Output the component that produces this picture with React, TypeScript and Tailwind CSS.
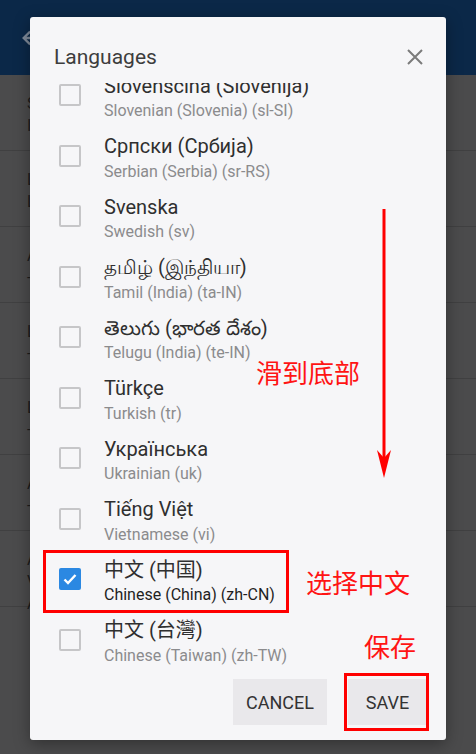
import React from "react";

const rows = [
  { t: "Slovenščina (Slovenija)", s: "Slovenian (Slovenia) (sl-SI)" },
  { t: "Српски (Србија)", s: "Serbian (Serbia) (sr-RS)" },
  { t: "Svenska", s: "Swedish (sv)" },
  { t: "தமிழ் (இந்தியா)", s: "Tamil (India) (ta-IN)" },
  { t: "తెలుగు (భారత దేశం)", s: "Telugu (India) (te-IN)" },
  { t: "Türkçe", s: "Turkish (tr)" },
  { t: "Українська", s: "Ukrainian (uk)" },
  { t: "Tiếng Việt", s: "Vietnamese (vi)" },
  { t: "中文 (中国)", s: "Chinese (China) (zh-CN)", checked: true },
  { t: "中文 (台灣)", s: "Chinese (Taiwan) (zh-TW)" },
];

const bgRows = [
  ["Sound", "Import"],
  ["Library", "Language"],
  ["Appearance", "-"],
  ["Library", "-"],
  ["Library", "-"],
  ["About", "-"],
  ["About", "Version", "All"],
];

const font = "font-['Roboto','Noto_Sans','Noto_Sans_CJK_SC',sans-serif]";

export default function App() {
  return (
    <div className={`relative w-[476px] h-[754px] overflow-hidden bg-[#4b4b4c] ${font}`}>
      {/* app bar */}
      <div className="h-[75px] bg-[#0b2848] flex items-center pl-[20px]">
        <svg width="22" height="22" viewBox="0 0 24 24" fill="none" stroke="#7f8a99" strokeWidth="2.5">
          <path d="M20 12H5M11 5l-7 7 7 7" />
        </svg>
      </div>
      {/* background list */}
      <div className="flex flex-col">
        {bgRows.map((r, i) => (
          <div
            key={i}
            className="h-[76px] border-b border-[#404041] pl-[27px] pt-[18px] flex flex-col text-[#1c1c1d] text-[16px] leading-[22px]"
          >
            {r.map((x, j) => (
              <span key={j}>{x}</span>
            ))}
          </div>
        ))}
      </div>

      {/* dialog */}
      <div className="absolute left-[30px] top-[17px] w-[416px] h-[723px] bg-[#f6f6f8] rounded-[3px] shadow-[0_4px_16px_rgba(0,0,0,0.35)] flex flex-col">
        <div className="h-[66px] flex justify-between items-start pl-[24px] pr-[23px] shrink-0">
          <div className="pt-[28px] text-[21px] leading-[25px] text-[#3d3d3d]">Languages</div>
          <svg className="mt-[32px]" width="16" height="16" viewBox="0 0 16 16" stroke="#7b7b7b" strokeWidth="2">
            <path d="M1 1L15 15M15 1L1 15" />
          </svg>
        </div>
        <div className="h-[588px] overflow-hidden shrink-0">
          <div className="-mt-[17px] flex flex-col">
            {rows.map((r, i) => (
              <div key={i} className="h-[60.5px] flex items-start pl-[29px] shrink-0">
                <div className="mt-[18px] shrink-0">
                  {r.checked ? (
                    <div className="w-[22px] h-[22px] rounded-[2px] bg-[#2b88e2] flex items-center justify-center">
                      <svg width="16" height="16" viewBox="0 0 16 16" fill="none" stroke="#ffffff" strokeWidth="2.4">
                        <path d="M2.5 8.5l3.5 3.5 7.5-8" />
                      </svg>
                    </div>
                  ) : (
                    <div className="w-[22px] h-[22px] rounded-[2px] border-[2.5px] border-[#c6c6c8]" />
                  )}
                </div>
                <div className="ml-[23px] pt-[7.5px] flex flex-col">
                  <span className="text-[20px] leading-[24px] text-[#2f2f2f] whitespace-nowrap">{r.t}</span>
                  <span
                    className={`mt-[3.5px] text-[16px] leading-[20px] whitespace-nowrap ${
                      r.checked ? "text-[#1f1f1f]" : "text-[#8b8b8d]"
                    }`}
                  >
                    {r.s}
                  </span>
                </div>
              </div>
            ))}
          </div>
        </div>
        <div className="flex justify-end gap-[21px] pt-[8px] pr-[19px] pb-[15px] shrink-0">
          <button className="w-[94px] h-[46px] bg-[#e9e8eb] text-[18px] text-[#333333] uppercase">Cancel</button>
          <button className="w-[79px] h-[46px] bg-[#e9e8eb] text-[18px] text-[#333333] uppercase">Save</button>
        </div>
      </div>

      {/* annotations */}
      <div className="absolute left-[43px] top-[550px] w-[246px] h-[63px] border-[3px] border-[#ff0000]" />
      <div className="absolute left-[344px] top-[673px] w-[85px] h-[58px] border-[3px] border-[#ff0000]" />
      <div className="absolute left-[256px] top-[356px] text-[26px] leading-[32px] text-[#ff1414] font-['Noto_Sans_CJK_SC',sans-serif] whitespace-nowrap">
        滑到底部
      </div>
      <div className="absolute left-[306px] top-[566px] text-[26px] leading-[32px] text-[#ff1414] font-['Noto_Sans_CJK_SC',sans-serif] whitespace-nowrap">
        选择中文
      </div>
      <div className="absolute left-[364px] top-[630px] text-[26px] leading-[32px] text-[#ff1414] font-['Noto_Sans_CJK_SC',sans-serif] whitespace-nowrap">
        保存
      </div>
      <svg className="absolute left-[376px] top-[208px]" width="16" height="272" viewBox="0 0 16 272">
        <path d="M8 1V252" stroke="#ff0000" strokeWidth="3" />
        <path d="M8 270L1 242L8 250L15 242Z" fill="#ff0000" />
      </svg>
    </div>
  );
}
